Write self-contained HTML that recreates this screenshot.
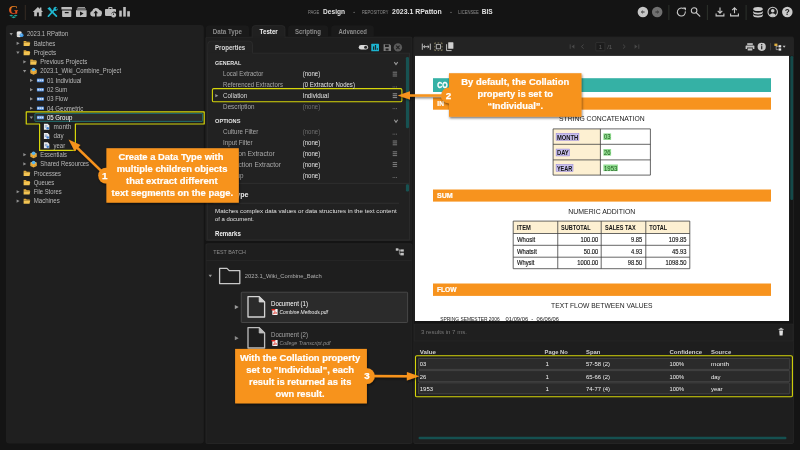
<!DOCTYPE html>
<html lang="en">
<head>
<meta charset="utf-8">
<title>Grooper Design - Collation Individual</title>
<style>
html,body{margin:0;padding:0;background:#141414;overflow:hidden;}
body{width:800px;height:450px;font-family:"Liberation Sans",sans-serif;}
svg{display:block;font-family:"Liberation Sans",sans-serif;will-change:transform;}
text{white-space:pre;}
</style>
</head>
<body>
<svg width="800" height="450" viewBox="0 0 800 450">
<defs>
<filter id="sh" x="-10%" y="-10%" width="125%" height="135%"><feDropShadow dx="0.6" dy="1.4" stdDeviation="1.3" flood-color="#000" flood-opacity="0.55"/></filter>
</defs>
<rect x="0.00" y="0.00" width="800.00" height="450.00" fill="#141414" />
<linearGradient id="lg" x1="0" y1="0" x2="0" y2="1"><stop offset="0" stop-color="#ec9a1e"/><stop offset="0.55" stop-color="#e0561c"/><stop offset="1" stop-color="#d42a20"/></linearGradient>
<text x="8.5" y="14.4" font-size="12.9" font-weight="bold" font-family="Liberation Serif, serif" fill="url(#lg)" textLength="9.9" lengthAdjust="spacingAndGlyphs">G</text>
<path d="M9.2 15.5 l2 -0.8 l2 0.8 l-2 0.9 Z M13.6 15.5 l2 -0.8 l2 0.8 l-2 0.9 Z M11.4 17.2 l2.2 -0.9 l2.2 0.9 l-2.2 1 Z" fill="#1fa79a" />
<line x1="25.30" y1="5.00" x2="25.30" y2="20.00" stroke="#3a2f26" stroke-width="0.9" />
<g fill="#bdbdbd">
<path d="M32.8 11.9 L37.9 7 L39.9 8.9 V7.6 h1.5 v2.7 L43 11.9 H41.6 V16.2 H38.9 V12.6 H36.9 V16.2 H34.2 V11.9 Z" />
</g>
<g stroke="#20b8d0" stroke-width="1.7" stroke-linecap="round" fill="none">
<path d="M48.4 16.2 L54.6 9.4" fill="none" />
<path d="M50.6 10.4 L56.4 16.2" fill="none" />
</g>
<path d="M47.4 8.6 l2.2 -1.6 l2.2 2.4 l-1.6 1.6 Z" fill="#20b8d0" />
<path d="M53.4 8.2 a2.4 2.4 0 0 1 3.6 -0.9 l-1.6 1.5 l0.9 0.9 l1.5 -1.5 a2.4 2.4 0 0 1 -3.1 2.6 Z" fill="#20b8d0" />
<g fill="#bdbdbd">
<rect x="61.40" y="7.00" width="10.60" height="2.60" fill="#bdbdbd" rx="0.5" />
<path d="M62.1 10.4 H71.3 V16.2 q0 0.8 -0.8 0.8 H62.9 q-0.8 0 -0.8 -0.8 Z M64.8 12 v1.2 h3.8 v-1.2 Z" fill-rule="evenodd"/>
<rect x="77.60" y="7.00" width="7.40" height="0.80" fill="#bdbdbd" />
<rect x="76.80" y="8.50" width="9.00" height="1.00" fill="#bdbdbd" />
<path d="M76 10.3 H86.6 V16.2 q0 0.8 -0.8 0.8 H76.8 q-0.8 0 -0.8 -0.8 Z M80 11.4 v4.4 l3.6 -2.2 Z" fill-rule="evenodd"/>
<path d="M92.6 16.4 a2.7 2.7 0 0 1 -0.4 -5.3 a3.9 3.9 0 0 1 7.3 -1 a3.2 3.2 0 0 1 -0.3 6.3 H96.6 V13.2 h1.5 L95.8 10.6 L93.5 13.2 h1.5 v3.2 Z" />
<path d="M108.3 8.9 V7.8 q0 -0.8 0.8 -0.8 h2.6 q0.8 0 0.8 0.8 V8.9 h2.7 q0.8 0 0.8 0.8 V12 a3.2 3.2 0 0 0 -4.6 3.9 H105.8 q-0.8 0 -0.8 -0.8 V9.7 q0 -0.8 0.8 -0.8 Z M109.4 8.9 h2 v-0.9 h-2 Z" fill-rule="evenodd"/>
<path d="M113.6 12.4 a2.6 2.6 0 1 0 0.01 0 Z M113.2 13.4 h0.8 v1.7 h-0.8 Z" fill-rule="evenodd"/>
<rect x="119.20" y="10.60" width="2.60" height="6.00" fill="#bdbdbd" />
<rect x="123.20" y="7.00" width="2.60" height="9.60" fill="#bdbdbd" />
<rect x="127.20" y="11.20" width="2.70" height="5.40" fill="#bdbdbd" />
</g>
<text x="308.10" y="14.10" font-size="5.2" fill="#8e8e8e" textLength="11.30" lengthAdjust="spacingAndGlyphs" >PAGE</text>
<text x="323.10" y="14.10" font-size="7.2" fill="#e2e2e2" font-weight="bold" textLength="21.90" lengthAdjust="spacingAndGlyphs" >Design</text>
<circle cx="354.1" cy="12.4" r="0.65" fill="#787878"/>
<text x="361.90" y="14.10" font-size="5.2" fill="#8e8e8e" textLength="26.50" lengthAdjust="spacingAndGlyphs" >REPOSITORY</text>
<text x="392.10" y="14.10" font-size="7.2" fill="#e2e2e2" font-weight="bold" textLength="49.60" lengthAdjust="spacingAndGlyphs" >2023.1 RPatton</text>
<circle cx="451" cy="12.4" r="0.65" fill="#787878"/>
<text x="458.20" y="14.10" font-size="5.2" fill="#8e8e8e" textLength="20.60" lengthAdjust="spacingAndGlyphs" >LICENSEE</text>
<text x="481.80" y="14.10" font-size="7.2" fill="#e2e2e2" font-weight="bold" textLength="10.90" lengthAdjust="spacingAndGlyphs" >BIS</text>
<circle cx="642.9" cy="12" r="5.25" fill="#c6c6c6"/>
<path d="M644.6 12 H641.8 M642.7 10.8 l-1.3 1.2 l1.3 1.2" fill="none" stroke="#333" stroke-width="1.0" />
<circle cx="657.2" cy="12" r="5.25" fill="#707070"/>
<path d="M655.4 12 H658.2 M657.3 10.8 l1.3 1.2 l-1.3 1.2" fill="none" stroke="#333" stroke-width="1.0" />
<line x1="668.90" y1="5.00" x2="668.90" y2="20.00" stroke="#30352f" stroke-width="0.9" />
<path d="M685.3 11.4 a4 4 0 1 1 -1.6 -2.6" fill="none" stroke="#cbcbcb" stroke-width="1.05" />
<path d="M682.9 7.5 h3 v3 Z" fill="#cbcbcb" transform="rotate(6 684.4 9)"/>
<circle cx="694.1" cy="10.5" r="2.8" fill="none" stroke="#cbcbcb" stroke-width="1.05"/>
<line x1="696.20" y1="12.60" x2="699.80" y2="16.10" stroke="#cbcbcb" stroke-width="1.25" stroke-linecap="round"/>
<line x1="707.40" y1="5.00" x2="707.40" y2="20.00" stroke="#30352f" stroke-width="0.9" />
<path d="M720 7.6 V13 M717.7 10.8 l2.3 2.3 l2.3 -2.3" fill="none" stroke="#cbcbcb" stroke-width="1.1" />
<path d="M716.1 13.4 v2.5 h7.8 v-2.5" fill="none" stroke="#cbcbcb" stroke-width="1.1" />
<path d="M734.5 13.2 V8 M732.2 10.2 l2.3 -2.3 l2.3 2.3" fill="none" stroke="#cbcbcb" stroke-width="1.1" />
<path d="M730.6 13.4 v2.5 h7.8 v-2.5" fill="none" stroke="#cbcbcb" stroke-width="1.1" />
<line x1="746.10" y1="5.00" x2="746.10" y2="20.00" stroke="#30352f" stroke-width="0.9" />
<g fill="#cbcbcb">
<ellipse cx="758" cy="9" rx="4.8" ry="2"/>
<path d="M753.2 10.7 a4.8 2 0 0 0 9.6 0 v1.9 a4.8 2 0 0 1 -9.6 0 Z" />
<path d="M753.2 13.8 a4.8 2 0 0 0 9.6 0 v1.6 a4.8 2 0 0 1 -9.6 0 Z" />
</g>
<circle cx="772.7" cy="12" r="5.25" fill="#cbcbcb"/>
<circle cx="772.7" cy="12" r="4.2" fill="#1a1a1a"/>
<circle cx="772.7" cy="10.7" r="1.8" fill="#cbcbcb"/>
<path d="M769.3 15.2 q3.4 -3.8 6.8 0 q-3.4 2.6 -6.8 0 Z" fill="#cbcbcb" />
<circle cx="787.3" cy="12" r="5.25" fill="#cbcbcb"/>
<text x="787.30" y="15.05" font-size="8.2" fill="#1a1a1a" font-weight="bold" text-anchor="middle" >?</text>
<rect x="6.00" y="25.00" width="197.75" height="418.50" fill="#1f1f1f" rx="3" />
<rect x="34.90" y="113.40" width="167.70" height="8.00" fill="#2b2b2b" rx="0.6" stroke="#1f7575" stroke-width="0.9" />
<path d="M9.50 32.90 H12.90 L11.20 35.50 Z" fill="#909090" />
<path d="M16.80 32.10 a2.4 0.9 0 0 1 4.8 0 v4.2 a2.4 0.9 0 0 1 -4.8 0 Z" fill="#e6e6e6" />
<path d="M16.80 33.50 a2.4 0.9 0 0 0 4.8 0 M16.80 34.90 a2.4 0.9 0 0 0 4.8 0" fill="none" stroke="#a8a8a8" stroke-width="0.4" />
<circle cx="21.60" cy="35.20" r="1.9" fill="#3d9ae8"/>
<circle cx="21.20" cy="34.80" r="0.7" fill="#9fd0f8"/>
<text x="27.00" y="36.35" font-size="6.35" fill="#bababa" textLength="41.20" lengthAdjust="spacingAndGlyphs" >2023.1 RPatton</text>
<path d="M16.60 41.68 L19.60 43.28 L16.60 44.88 Z" fill="#909090" />
<path d="M23.63 40.88 h2.3 l0.8 0.9 h3 v1 h-6.1 Z" fill="#e0a93a" />
<path d="M23.63 42.68 h6.6 l-0.7 3.4 h-5.9 Z" fill="#f3c452" />
<text x="33.63" y="45.63" font-size="6.35" fill="#bababa" textLength="21.60" lengthAdjust="spacingAndGlyphs" >Batches</text>
<path d="M16.20 51.46 H19.60 L17.90 54.06 Z" fill="#909090" />
<path d="M23.63 50.16 h2.3 l0.8 0.9 h3 v1 h-6.1 Z" fill="#e0a93a" />
<path d="M23.63 51.96 h6.6 l-0.7 3.4 h-5.9 Z" fill="#f3c452" />
<text x="33.63" y="54.91" font-size="6.35" fill="#bababa" textLength="22.60" lengthAdjust="spacingAndGlyphs" >Projects</text>
<path d="M23.30 60.24 L26.30 61.84 L23.30 63.44 Z" fill="#909090" />
<path d="M30.26 59.44 h2.3 l0.8 0.9 h3 v1 h-6.1 Z" fill="#e0a93a" />
<path d="M30.26 61.24 h6.6 l-0.7 3.4 h-5.9 Z" fill="#f3c452" />
<text x="40.26" y="64.19" font-size="6.35" fill="#bababa" textLength="47.00" lengthAdjust="spacingAndGlyphs" >Previous Projects</text>
<path d="M22.90 70.02 H26.30 L24.60 72.62 Z" fill="#909090" />
<path d="M30.36 69.82 L33.56 71.02 L36.76 69.82 V73.22 L33.56 74.82 L30.36 73.22 Z" fill="#ecae3e" />
<path d="M30.36 69.82 L33.56 71.02 L36.76 69.82 L33.56 68.72 Z" fill="#f6d27e" />
<path d="M31.46 72.52 l1.4 0.7 M35.66 72.52 l-1.4 0.7" fill="none" stroke="#b07818" stroke-width="0.5" />
<circle cx="33.56" cy="69.62" r="1.75" fill="#55b4f0"/>
<text x="40.26" y="73.47" font-size="6.35" fill="#bababa" textLength="80.80" lengthAdjust="spacingAndGlyphs" >2023.1_Wiki_Combine_Project</text>
<path d="M30.00 78.80 L33.00 80.40 L30.00 82.00 Z" fill="#909090" />
<rect x="36.89" y="78.60" width="7.00" height="3.60" fill="#3f7fd2" rx="0.4" />
<rect x="37.39" y="79.40" width="6.00" height="1.90" fill="#d6e5f8" />
<line x1="39.39" y1="79.40" x2="39.39" y2="81.30" stroke="#3f7fd2" stroke-width="0.6" />
<line x1="41.39" y1="79.40" x2="41.39" y2="81.30" stroke="#3f7fd2" stroke-width="0.6" />
<text x="46.89" y="82.75" font-size="6.35" fill="#bababa" textLength="34.60" lengthAdjust="spacingAndGlyphs" >01 Individual</text>
<path d="M30.00 88.08 L33.00 89.68 L30.00 91.28 Z" fill="#909090" />
<rect x="36.89" y="87.88" width="7.00" height="3.60" fill="#3f7fd2" rx="0.4" />
<rect x="37.39" y="88.68" width="6.00" height="1.90" fill="#d6e5f8" />
<line x1="39.39" y1="88.68" x2="39.39" y2="90.58" stroke="#3f7fd2" stroke-width="0.6" />
<line x1="41.39" y1="88.68" x2="41.39" y2="90.58" stroke="#3f7fd2" stroke-width="0.6" />
<text x="46.89" y="92.03" font-size="6.35" fill="#bababa" textLength="20.40" lengthAdjust="spacingAndGlyphs" >02 Sum</text>
<path d="M30.00 97.36 L33.00 98.96 L30.00 100.56 Z" fill="#909090" />
<rect x="36.89" y="97.16" width="7.00" height="3.60" fill="#3f7fd2" rx="0.4" />
<rect x="37.39" y="97.96" width="6.00" height="1.90" fill="#d6e5f8" />
<line x1="39.39" y1="97.96" x2="39.39" y2="99.86" stroke="#3f7fd2" stroke-width="0.6" />
<line x1="41.39" y1="97.96" x2="41.39" y2="99.86" stroke="#3f7fd2" stroke-width="0.6" />
<text x="46.89" y="101.31" font-size="6.35" fill="#bababa" textLength="20.80" lengthAdjust="spacingAndGlyphs" >03 Flow</text>
<path d="M30.00 106.64 L33.00 108.24 L30.00 109.84 Z" fill="#909090" />
<rect x="36.89" y="106.44" width="7.00" height="3.60" fill="#3f7fd2" rx="0.4" />
<rect x="37.39" y="107.24" width="6.00" height="1.90" fill="#d6e5f8" />
<line x1="39.39" y1="107.24" x2="39.39" y2="109.14" stroke="#3f7fd2" stroke-width="0.6" />
<line x1="41.39" y1="107.24" x2="41.39" y2="109.14" stroke="#3f7fd2" stroke-width="0.6" />
<text x="46.89" y="110.59" font-size="6.35" fill="#bababa" textLength="36.40" lengthAdjust="spacingAndGlyphs" >04 Geometric</text>
<path d="M29.60 116.42 H33.00 L31.30 119.02 Z" fill="#909090" />
<rect x="36.89" y="115.72" width="7.00" height="3.60" fill="#3f7fd2" rx="0.4" />
<rect x="37.39" y="116.52" width="6.00" height="1.90" fill="#d6e5f8" />
<line x1="39.39" y1="116.52" x2="39.39" y2="118.42" stroke="#3f7fd2" stroke-width="0.6" />
<line x1="41.39" y1="116.52" x2="41.39" y2="118.42" stroke="#3f7fd2" stroke-width="0.6" />
<text x="46.89" y="119.87" font-size="6.35" fill="#ffffff" textLength="25.40" lengthAdjust="spacingAndGlyphs" >05 Group</text>
<path d="M43.92 123.80 h3.8 l1.6 1.6 v4.4 h-5.4 Z" fill="#ececec" />
<path d="M44.82 125.80 h2.6 M44.82 127.10 h2" fill="none" stroke="#4d77b0" stroke-width="0.6" />
<circle cx="47.72" cy="128.30" r="1.25" fill="#3f7fd0"/>
<text x="53.52" y="129.15" font-size="6.35" fill="#bababa" textLength="17.80" lengthAdjust="spacingAndGlyphs" >month</text>
<path d="M43.92 133.08 h3.8 l1.6 1.6 v4.4 h-5.4 Z" fill="#ececec" />
<path d="M44.82 135.08 h2.6 M44.82 136.38 h2" fill="none" stroke="#4d77b0" stroke-width="0.6" />
<circle cx="47.72" cy="137.58" r="1.25" fill="#3f7fd0"/>
<text x="53.52" y="138.43" font-size="6.35" fill="#bababa" textLength="10.00" lengthAdjust="spacingAndGlyphs" >day</text>
<path d="M43.92 142.36 h3.8 l1.6 1.6 v4.4 h-5.4 Z" fill="#ececec" />
<path d="M44.82 144.36 h2.6 M44.82 145.66 h2" fill="none" stroke="#4d77b0" stroke-width="0.6" />
<circle cx="47.72" cy="146.86" r="1.25" fill="#3f7fd0"/>
<text x="53.52" y="147.71" font-size="6.35" fill="#bababa" textLength="11.60" lengthAdjust="spacingAndGlyphs" >year</text>
<path d="M23.30 153.04 L26.30 154.64 L23.30 156.24 Z" fill="#909090" />
<path d="M30.36 153.34 L33.56 154.54 L36.76 153.34 V156.74 L33.56 158.34 L30.36 156.74 Z" fill="#ecae3e" />
<path d="M30.36 153.34 L33.56 154.54 L36.76 153.34 L33.56 152.24 Z" fill="#f6d27e" />
<path d="M31.46 156.04 l1.4 0.7 M35.66 156.04 l-1.4 0.7" fill="none" stroke="#b07818" stroke-width="0.5" />
<circle cx="33.56" cy="153.14" r="1.75" fill="#55b4f0"/>
<text x="40.26" y="156.99" font-size="6.35" fill="#bababa" textLength="26.60" lengthAdjust="spacingAndGlyphs" >Essentials</text>
<path d="M23.30 162.32 L26.30 163.92 L23.30 165.52 Z" fill="#909090" />
<path d="M30.36 162.62 L33.56 163.82 L36.76 162.62 V166.02 L33.56 167.62 L30.36 166.02 Z" fill="#ecae3e" />
<path d="M30.36 162.62 L33.56 163.82 L36.76 162.62 L33.56 161.52 Z" fill="#f6d27e" />
<path d="M31.46 165.32 l1.4 0.7 M35.66 165.32 l-1.4 0.7" fill="none" stroke="#b07818" stroke-width="0.5" />
<circle cx="33.56" cy="162.42" r="1.75" fill="#55b4f0"/>
<text x="40.26" y="166.27" font-size="6.35" fill="#bababa" textLength="48.80" lengthAdjust="spacingAndGlyphs" >Shared Resources</text>
<path d="M23.63 170.80 h2.3 l0.8 0.9 h3 v1 h-6.1 Z" fill="#e0a93a" />
<path d="M23.63 172.60 h6.6 l-0.7 3.4 h-5.9 Z" fill="#f3c452" />
<text x="33.63" y="175.55" font-size="6.35" fill="#bababa" textLength="27.40" lengthAdjust="spacingAndGlyphs" >Processes</text>
<path d="M23.63 180.08 h2.3 l0.8 0.9 h3 v1 h-6.1 Z" fill="#e0a93a" />
<path d="M23.63 181.88 h6.6 l-0.7 3.4 h-5.9 Z" fill="#f3c452" />
<text x="33.63" y="184.83" font-size="6.35" fill="#bababa" textLength="20.60" lengthAdjust="spacingAndGlyphs" >Queues</text>
<path d="M16.60 190.16 L19.60 191.76 L16.60 193.36 Z" fill="#909090" />
<path d="M23.63 189.36 h2.3 l0.8 0.9 h3 v1 h-6.1 Z" fill="#e0a93a" />
<path d="M23.63 191.16 h6.6 l-0.7 3.4 h-5.9 Z" fill="#f3c452" />
<text x="33.63" y="194.11" font-size="6.35" fill="#bababa" textLength="28.00" lengthAdjust="spacingAndGlyphs" >File Stores</text>
<path d="M16.60 199.44 L19.60 201.04 L16.60 202.64 Z" fill="#909090" />
<path d="M23.63 198.64 h2.3 l0.8 0.9 h3 v1 h-6.1 Z" fill="#e0a93a" />
<path d="M23.63 200.44 h6.6 l-0.7 3.4 h-5.9 Z" fill="#f3c452" />
<text x="33.63" y="203.39" font-size="6.35" fill="#bababa" textLength="26.20" lengthAdjust="spacingAndGlyphs" >Machines</text>
<rect x="205.90" y="37.10" width="206.00" height="203.50" fill="#1e1e1e" rx="1.2" stroke="#2b2b2b" stroke-width="0.6" />
<path d="M205.9 36.9 V28.6 q0 -3 3 -3 H246 q3 0 3 3 V36.9 Z" fill="#1a1a1a" />
<text x="212.75" y="34.43" font-size="6.3" fill="#8c8c8c" font-weight="bold" textLength="29.30" lengthAdjust="spacingAndGlyphs" >Data Type</text>
<path d="M288.1 36.9 V28.6 q0 -3 3 -3 H325.1 q3 0 3 3 V36.9 Z" fill="#1a1a1a" />
<text x="295.00" y="34.43" font-size="6.3" fill="#8c8c8c" font-weight="bold" textLength="25.90" lengthAdjust="spacingAndGlyphs" >Scripting</text>
<path d="M331.25 36.9 V28.6 q0 -3 3 -3 H370.75 q3 0 3 3 V36.9 Z" fill="#1a1a1a" />
<text x="338.50" y="34.43" font-size="6.3" fill="#8c8c8c" font-weight="bold" textLength="28.40" lengthAdjust="spacingAndGlyphs" >Advanced</text>
<path d="M252.1 37.4 V28.6 q0 -3 3 -3 H282 q3 0 3 3 V37.4 Z" fill="#202020" stroke="#2d2d2d" stroke-width="0.6" />
<text x="259.60" y="34.43" font-size="6.3" fill="#f2f2f2" font-weight="bold" textLength="18.20" lengthAdjust="spacingAndGlyphs" >Tester</text>
<rect x="252.50" y="36.60" width="32.10" height="1.40" fill="#1f1f1f" />
<rect x="207.75" y="53.10" width="201.65" height="130.10" fill="#222222" stroke="#323232" stroke-width="0.6" />
<path d="M207.75 53.4 V44.2 q0 -3 3 -3 H249.5 q3 0 3 3 V53.4" fill="#222222" stroke="#323232" stroke-width="0.6" />
<rect x="208.10" y="52.60" width="44.10" height="1.40" fill="#222222" />
<text x="215.00" y="50.08" font-size="6.3" fill="#d8d8d8" font-weight="bold" textLength="30.25" lengthAdjust="spacingAndGlyphs" >Properties</text>
<rect x="358.75" y="45.00" width="9.35" height="4.60" fill="#d8d8d8" rx="2.3" />
<circle cx="365.6" cy="47.3" r="1.5" fill="#2a2a2a"/>
<rect x="371.25" y="43.75" width="7.75" height="7.50" fill="#1cb4d0" rx="0.5" />
<rect x="373.00" y="46.40" width="1.20" height="3.40" fill="#1a2a30" />
<rect x="374.90" y="45.00" width="1.20" height="4.80" fill="#1a2a30" />
<rect x="376.80" y="48.20" width="1.00" height="1.60" fill="#1a2a30" />
<path d="M383.6 44.2 h6 l1.4 1.4 v5.4 h-7.4 Z M385 44.8 v2.2 h3.8 v-2.2 Z M385.6 48.4 h3 v2 h-3 Z" fill="#7d7d7d" fill-rule="evenodd"/>
<circle cx="397.9" cy="47.4" r="4.2" fill="#5a5a5a"/>
<path d="M396.2 45.7 l3.4 3.4 M399.6 45.7 l-3.4 3.4" fill="none" stroke="#222" stroke-width="1.1" />
<rect x="405.90" y="56.90" width="3.10" height="71.40" fill="#175252" rx="1.4" />
<text x="215.00" y="65.12" font-size="6.0" fill="#e2e2e2" font-weight="bold" textLength="26.25" lengthAdjust="spacingAndGlyphs" >GENERAL</text>
<path d="M394.30 62.10 L396.00 64.50 L397.70 62.10" fill="none" stroke="#9a9a9a" stroke-width="1.1" />
<text x="215.00" y="122.92" font-size="6.0" fill="#e2e2e2" font-weight="bold" textLength="25.40" lengthAdjust="spacingAndGlyphs" >OPTIONS</text>
<path d="M394.30 119.80 L396.00 122.20 L397.70 119.80" fill="none" stroke="#9a9a9a" stroke-width="1.1" />
<rect x="212.40" y="88.60" width="189.50" height="13.20" fill="none" rx="1.4" stroke="#d6d60a" stroke-width="1.1" />
<text x="223.10" y="76.45" font-size="6.35" fill="#a8a8a8" textLength="40.20" lengthAdjust="spacingAndGlyphs" >Local Extractor</text>
<text x="302.70" y="76.45" font-size="6.35" fill="#e4e4e4" textLength="17.60" lengthAdjust="spacingAndGlyphs" >(none)</text>
<line x1="392.70" y1="72.20" x2="397.10" y2="72.20" stroke="#8c8c8c" stroke-width="0.85" />
<line x1="392.70" y1="74.10" x2="397.10" y2="74.10" stroke="#8c8c8c" stroke-width="0.85" />
<line x1="392.70" y1="76.00" x2="397.10" y2="76.00" stroke="#8c8c8c" stroke-width="0.85" />
<text x="223.10" y="87.25" font-size="6.35" fill="#a8a8a8" textLength="59.80" lengthAdjust="spacingAndGlyphs" >Referenced Extractors</text>
<text x="302.70" y="87.25" font-size="6.35" fill="#e4e4e4" textLength="52.20" lengthAdjust="spacingAndGlyphs" >(0 Extractor Nodes)</text>
<rect x="392.65" y="86.50" width="0.90" height="0.90" fill="#7a7a7a" />
<rect x="394.35" y="86.50" width="0.90" height="0.90" fill="#7a7a7a" />
<rect x="396.05" y="86.50" width="0.90" height="0.90" fill="#7a7a7a" />
<text x="223.10" y="98.05" font-size="6.35" fill="#d8d8d8" textLength="24.20" lengthAdjust="spacingAndGlyphs" >Collation</text>
<text x="302.70" y="98.05" font-size="6.35" fill="#e4e4e4" textLength="26.20" lengthAdjust="spacingAndGlyphs" >Individual</text>
<line x1="392.70" y1="93.80" x2="397.10" y2="93.80" stroke="#a6a6a6" stroke-width="0.85" />
<line x1="392.70" y1="95.70" x2="397.10" y2="95.70" stroke="#a6a6a6" stroke-width="0.85" />
<line x1="392.70" y1="97.60" x2="397.10" y2="97.60" stroke="#a6a6a6" stroke-width="0.85" />
<text x="223.10" y="108.95" font-size="6.35" fill="#a8a8a8" textLength="31.40" lengthAdjust="spacingAndGlyphs" >Description</text>
<text x="302.70" y="108.95" font-size="6.35" fill="#6e6e6e" textLength="17.60" lengthAdjust="spacingAndGlyphs" >(none)</text>
<rect x="392.65" y="108.20" width="0.90" height="0.90" fill="#7a7a7a" />
<rect x="394.35" y="108.20" width="0.90" height="0.90" fill="#7a7a7a" />
<rect x="396.05" y="108.20" width="0.90" height="0.90" fill="#7a7a7a" />
<text x="223.10" y="134.45" font-size="6.35" fill="#a8a8a8" textLength="35.20" lengthAdjust="spacingAndGlyphs" >Culture Filter</text>
<text x="302.70" y="134.45" font-size="6.35" fill="#6e6e6e" textLength="17.60" lengthAdjust="spacingAndGlyphs" >(none)</text>
<rect x="392.65" y="133.70" width="0.90" height="0.90" fill="#7a7a7a" />
<rect x="394.35" y="133.70" width="0.90" height="0.90" fill="#7a7a7a" />
<rect x="396.05" y="133.70" width="0.90" height="0.90" fill="#7a7a7a" />
<text x="223.10" y="145.25" font-size="6.35" fill="#a8a8a8" textLength="29.60" lengthAdjust="spacingAndGlyphs" >Input Filter</text>
<text x="302.70" y="145.25" font-size="6.35" fill="#e4e4e4" textLength="17.60" lengthAdjust="spacingAndGlyphs" >(none)</text>
<line x1="392.70" y1="141.00" x2="397.10" y2="141.00" stroke="#8c8c8c" stroke-width="0.85" />
<line x1="392.70" y1="142.90" x2="397.10" y2="142.90" stroke="#8c8c8c" stroke-width="0.85" />
<line x1="392.70" y1="144.80" x2="397.10" y2="144.80" stroke="#8c8c8c" stroke-width="0.85" />
<text x="223.10" y="156.05" font-size="6.35" fill="#a8a8a8" textLength="51.60" lengthAdjust="spacingAndGlyphs" >Version Extractor</text>
<text x="302.70" y="156.05" font-size="6.35" fill="#e4e4e4" textLength="17.60" lengthAdjust="spacingAndGlyphs" >(none)</text>
<line x1="392.70" y1="151.80" x2="397.10" y2="151.80" stroke="#8c8c8c" stroke-width="0.85" />
<line x1="392.70" y1="153.70" x2="397.10" y2="153.70" stroke="#8c8c8c" stroke-width="0.85" />
<line x1="392.70" y1="155.60" x2="397.10" y2="155.60" stroke="#8c8c8c" stroke-width="0.85" />
<text x="223.10" y="166.85" font-size="6.35" fill="#a8a8a8" textLength="57.80" lengthAdjust="spacingAndGlyphs" >Extraction Extractor</text>
<text x="302.70" y="166.85" font-size="6.35" fill="#e4e4e4" textLength="17.60" lengthAdjust="spacingAndGlyphs" >(none)</text>
<line x1="392.70" y1="162.60" x2="397.10" y2="162.60" stroke="#8c8c8c" stroke-width="0.85" />
<line x1="392.70" y1="164.50" x2="397.10" y2="164.50" stroke="#8c8c8c" stroke-width="0.85" />
<line x1="392.70" y1="166.40" x2="397.10" y2="166.40" stroke="#8c8c8c" stroke-width="0.85" />
<text x="223.10" y="177.75" font-size="6.35" fill="#a8a8a8" textLength="20.50" lengthAdjust="spacingAndGlyphs" >Lookup</text>
<text x="302.70" y="177.75" font-size="6.35" fill="#e4e4e4" textLength="17.60" lengthAdjust="spacingAndGlyphs" >(none)</text>
<rect x="392.65" y="177.00" width="0.90" height="0.90" fill="#7a7a7a" />
<rect x="394.35" y="177.00" width="0.90" height="0.90" fill="#7a7a7a" />
<rect x="396.05" y="177.00" width="0.90" height="0.90" fill="#7a7a7a" />
<path d="M215.30 94.10 L218.30 95.70 L215.30 97.30 Z" fill="#9a9a9a" />
<rect x="207.75" y="183.60" width="201.65" height="56.40" fill="#212121" stroke="#323232" stroke-width="0.6" />
<text x="215.00" y="197.20" font-size="7.0" fill="#ececec" font-weight="bold" textLength="33.50" lengthAdjust="spacingAndGlyphs" >Data Type</text>
<line x1="213.40" y1="203.20" x2="399.00" y2="203.20" stroke="#3a3a3a" stroke-width="0.6" />
<text x="215.00" y="213.06" font-size="6.1" fill="#e0e0e0" textLength="181.60" lengthAdjust="spacingAndGlyphs" >Matches complex data values or data structures in the text content</text>
<text x="215.00" y="220.86" font-size="6.1" fill="#e0e0e0" textLength="39.00" lengthAdjust="spacingAndGlyphs" >of a document.</text>
<text x="215.00" y="235.53" font-size="6.3" fill="#f0f0f0" font-weight="bold" textLength="25.80" lengthAdjust="spacingAndGlyphs" >Remarks</text>
<rect x="405.90" y="184.30" width="3.10" height="7.20" fill="#175252" rx="1.2" />
<rect x="205.90" y="243.80" width="206.00" height="199.70" fill="#1e1e1e" rx="1.2" stroke="#2b2b2b" stroke-width="0.6" />
<line x1="206.20" y1="260.60" x2="411.60" y2="260.60" stroke="#2e2e2e" stroke-width="0.6" />
<text x="213.20" y="254.17" font-size="5.6" fill="#8e8e8e" textLength="32.70" lengthAdjust="spacingAndGlyphs" >TEST BATCH</text>
<g fill="#c4c4c4">
<rect x="395.80" y="248.30" width="2.60" height="2.40" fill="#c4c4c4" />
<rect x="400.40" y="249.40" width="3.40" height="2.20" fill="#c4c4c4" />
<rect x="400.40" y="252.80" width="3.40" height="2.60" fill="#c4c4c4" />
</g>
<path d="M398.4 249.6 h1 v4.6 h1.4 M399.4 250.4 h1.2" fill="none" stroke="#c4c4c4" stroke-width="0.6" />
<path d="M208.60 274.70 H212.00 L210.30 277.30 Z" fill="#9a9a9a" />
<path d="M219.6 268.4 H227 L229.2 270.6 H239.8 V283.6 H219.6 Z" fill="none" stroke="#c8c8c8" stroke-width="1.3" stroke-linejoin="round"/>
<text x="244.80" y="277.99" font-size="6.2" fill="#b0b0b0" textLength="77.00" lengthAdjust="spacingAndGlyphs" >2023.1_Wiki_Combine_Batch</text>
<rect x="241.25" y="292.20" width="166.35" height="30.30" fill="#2b2b2b" rx="0.8" stroke="#565656" stroke-width="0.7" />
<path d="M234.81 305.02 L238.71 307.10 L234.81 309.18 Z" fill="#9a9a9a" />
<path d="M248.0 296.6 H259.20000000000005 L264.6 302.0 V317.0 H248.0 Z" fill="none" stroke="#d4d4d4" stroke-width="1.3" stroke-linejoin="round"/>
<path d="M259.20000000000005 296.6 V302.0 H264.6 Z" fill="#d4d4d4" stroke="#d4d4d4" stroke-width="0.8" stroke-linejoin="round"/>
<text x="271.00" y="306.17" font-size="6.4" fill="#ffffff" textLength="37.00" lengthAdjust="spacingAndGlyphs" >Document (1)</text>
<rect x="272.30" y="309.10" width="5.30" height="5.90" fill="#f6f6f6" rx="0.4" />
<rect x="271.70" y="309.10" width="3.50" height="1.40" fill="#e0281e" rx="0.2" />
<path d="M273.50 313.90 q1.2 -3 1.6 -2.4 q0.3 0.9 1.7 1.6 q-2.2 -0.3 -3.3 0.8" fill="none" stroke="#e0281e" stroke-width="0.7" />
<text x="279.40" y="314.00" font-size="5.4" fill="#f0f0f0" font-style="italic" textLength="48.50" lengthAdjust="spacingAndGlyphs" >Combine Methods.pdf</text>
<path d="M234.81 336.12 L238.71 338.20 L234.81 340.28 Z" fill="#8a8a8a" />
<path d="M248.0 327.6 H259.20000000000005 L264.6 333.0 V348.0 H248.0 Z" fill="none" stroke="#bdbdbd" stroke-width="1.3" stroke-linejoin="round"/>
<path d="M259.20000000000005 327.6 V333.0 H264.6 Z" fill="#bdbdbd" stroke="#bdbdbd" stroke-width="0.8" stroke-linejoin="round"/>
<text x="271.00" y="337.17" font-size="6.4" fill="#a4a4a4" textLength="37.00" lengthAdjust="spacingAndGlyphs" >Document (2)</text>
<rect x="272.30" y="340.10" width="5.30" height="5.90" fill="#f6f6f6" rx="0.4" />
<rect x="271.70" y="340.10" width="3.50" height="1.40" fill="#e0281e" rx="0.2" />
<path d="M273.50 344.90 q1.2 -3 1.6 -2.4 q0.3 0.9 1.7 1.6 q-2.2 -0.3 -3.3 0.8" fill="none" stroke="#e0281e" stroke-width="0.7" />
<text x="279.40" y="345.00" font-size="5.4" fill="#8c8c8c" font-style="italic" textLength="51.20" lengthAdjust="spacingAndGlyphs" >College Transcript.pdf</text>
<rect x="413.80" y="37.10" width="379.60" height="406.40" fill="#1e1e1e" rx="1.2" stroke="#2b2b2b" stroke-width="0.6" />
<rect x="414.20" y="37.50" width="378.80" height="18.40" fill="#232323" />
<path d="M422.3 43.6 V49.8 M430.3 43.6 V49.8 M423.6 46.7 H429 M424.9 45.4 l-1.4 1.3 l1.4 1.3 M427.7 45.4 l1.4 1.3 l-1.4 1.3" fill="none" stroke="#cfcfcf" stroke-width="0.9" />
<rect x="436.30" y="44.60" width="4.20" height="4.20" fill="none" stroke="#b8b8b8" stroke-width="0.9" />
<path d="M434.6 43 h1.4 M437.6 43 h1.6 M440.8 43 h1.4 M434.6 50.4 h1.4 M437.6 50.4 h1.6 M440.8 50.4 h1.4 M434.8 43 v1.2 M434.8 45.9 v1.6 M434.8 49.2 v1.2 M442 43 v1.2 M442 45.9 v1.6 M442 49.2 v1.2" fill="none" stroke="#96906c" stroke-width="0.8" />
<rect x="448.20" y="42.30" width="5.20" height="6.50" fill="#cfcfcf" rx="0.5" />
<path d="M446.6 44.2 V50.6 H451.6" fill="none" stroke="#cfcfcf" stroke-width="0.9" />
<path d="M570.2 44.4 v4.4" fill="none" stroke="#484848" stroke-width="0.9" />
<path d="M574.4 44.4 L571.6 46.6 L574.4 48.8 Z" fill="#484848" />
<path d="M583.6 44.6 L581.4 46.6 L583.6 48.6" fill="none" stroke="#484848" stroke-width="0.9" />
<rect x="595.80" y="42.40" width="9.10" height="8.40" fill="#1c1c1c" rx="0.6" stroke="#3a3a3a" stroke-width="0.6" />
<text x="600.40" y="48.92" font-size="6" fill="#5c5c5c" text-anchor="middle" >1</text>
<text x="607.20" y="48.92" font-size="6" fill="#5c5c5c" >/1</text>
<path d="M623 44.6 L625.2 46.6 L623 48.6" fill="none" stroke="#484848" stroke-width="0.9" />
<path d="M634.6 44.4 L637.4 46.6 L634.6 48.8 Z" fill="#484848" />
<path d="M638.8 44.4 v4.4" fill="none" stroke="#484848" stroke-width="0.9" />
<path d="M747.2 43.2 h5.6 v1.7 h-5.6 Z" fill="#c4c4c4" />
<path d="M746.3 45.4 h7.4 q0.7 0 0.7 0.7 v2.9 h-1.5 v-1.5 h-5.8 v1.5 h-1.5 v-2.9 q0 -0.7 0.7 -0.7 Z" fill="#c4c4c4" />
<path d="M747.7 48.4 h4.6 v2.1 h-4.6 Z" fill="#c4c4c4" />
<circle cx="761.7" cy="46.8" r="4.1" fill="#c8c8c8"/>
<rect x="761.10" y="46.10" width="1.20" height="3.20" fill="#222" />
<circle cx="761.7" cy="44.7" r="0.75" fill="#222"/>
<line x1="770.50" y1="43.20" x2="770.50" y2="50.40" stroke="#4a4a4a" stroke-width="0.7" />
<rect x="774.40" y="43.60" width="3.00" height="2.40" fill="#e0b040" />
<rect x="778.60" y="45.20" width="2.60" height="2.20" fill="#e8e8e8" />
<rect x="778.60" y="48.40" width="2.60" height="2.20" fill="#e8e8e8" />
<path d="M776.2 46 v3.6 h2.4 M776.2 46.4 h2.4" fill="none" stroke="#c8c8c8" stroke-width="0.6" />
<path d="M782.6 45.8 h3 l-1.5 2 Z" fill="#c8c8c8" />
<rect x="415.00" y="55.90" width="374.20" height="265.10" fill="#ffffff" />
<rect x="789.20" y="55.90" width="4.00" height="265.10" fill="#151515" />
<rect x="790.30" y="56.00" width="2.90" height="144.00" fill="#144a4a" rx="1.2" />
<rect x="433.00" y="78.20" width="338.00" height="13.80" fill="#35b1a5" />
<text x="437.20" y="87.92" font-size="8.4" fill="#ffffff" font-weight="bold" textLength="10.40" lengthAdjust="spacingAndGlyphs" stroke="#fff" stroke-width="0.35">CO</text>
<rect x="433.00" y="97.50" width="338.00" height="12.20" fill="#f7931e" />
<text x="437.30" y="105.64" font-size="6.5" fill="#ffffff" font-weight="bold" textLength="6.60" lengthAdjust="spacingAndGlyphs" stroke="#fff" stroke-width="0.2">IN</text>
<text x="601.80" y="121.46" font-size="7.4" fill="#1a1a1a" text-anchor="middle" textLength="85.60" lengthAdjust="spacingAndGlyphs" >STRING CONCATENATION</text>
<rect x="553.10" y="128.90" width="47.30" height="46.20" fill="#fdf0d2" />
<line x1="553.10" y1="128.90" x2="650.40" y2="128.90" stroke="#404040" stroke-width="0.8" />
<line x1="553.10" y1="144.30" x2="650.40" y2="144.30" stroke="#404040" stroke-width="0.8" />
<line x1="553.10" y1="159.90" x2="650.40" y2="159.90" stroke="#404040" stroke-width="0.8" />
<line x1="553.10" y1="175.10" x2="650.40" y2="175.10" stroke="#404040" stroke-width="0.8" />
<line x1="553.10" y1="128.90" x2="553.10" y2="175.10" stroke="#404040" stroke-width="0.8" />
<line x1="600.40" y1="128.90" x2="600.40" y2="175.10" stroke="#404040" stroke-width="0.8" />
<line x1="650.40" y1="128.90" x2="650.40" y2="175.10" stroke="#404040" stroke-width="0.8" />
<rect x="556.10" y="133.40" width="22.80" height="6.90" fill="#c8c0ee" stroke="#8f80da" stroke-width="0.5" />
<text x="556.90" y="139.54" font-size="7.9" fill="#141414" font-weight="bold" textLength="21.30" lengthAdjust="spacingAndGlyphs" >MONTH</text>
<rect x="603.40" y="133.40" width="7.70" height="6.60" fill="#8fdc8f" />
<text x="604.00" y="139.44" font-size="7.6" fill="#1d5a1d" textLength="6.60" lengthAdjust="spacingAndGlyphs" >03</text>
<rect x="556.10" y="149.05" width="13.40" height="6.90" fill="#c8c0ee" stroke="#8f80da" stroke-width="0.5" />
<text x="556.90" y="155.19" font-size="7.9" fill="#141414" font-weight="bold" textLength="11.90" lengthAdjust="spacingAndGlyphs" >DAY</text>
<rect x="603.40" y="149.05" width="7.70" height="6.60" fill="#8fdc8f" />
<text x="604.00" y="155.09" font-size="7.6" fill="#1d5a1d" textLength="6.60" lengthAdjust="spacingAndGlyphs" >26</text>
<rect x="556.10" y="164.50" width="16.90" height="6.90" fill="#c8c0ee" stroke="#8f80da" stroke-width="0.5" />
<text x="556.90" y="170.64" font-size="7.9" fill="#141414" font-weight="bold" textLength="15.40" lengthAdjust="spacingAndGlyphs" >YEAR</text>
<rect x="603.40" y="164.50" width="14.50" height="6.60" fill="#8fdc8f" />
<text x="604.00" y="170.54" font-size="7.6" fill="#1d5a1d" textLength="13.40" lengthAdjust="spacingAndGlyphs" >1953</text>
<rect x="433.00" y="189.50" width="338.00" height="12.10" fill="#f7931e" />
<text x="436.90" y="197.80" font-size="6.9" fill="#ffffff" font-weight="bold" textLength="15.90" lengthAdjust="spacingAndGlyphs" stroke="#fff" stroke-width="0.2">SUM</text>
<text x="601.80" y="213.66" font-size="7.4" fill="#1a1a1a" text-anchor="middle" textLength="67.00" lengthAdjust="spacingAndGlyphs" >NUMERIC ADDITION</text>
<rect x="513.20" y="221.10" width="176.60" height="12.40" fill="#fdf0d2" />
<line x1="513.20" y1="221.10" x2="689.80" y2="221.10" stroke="#404040" stroke-width="0.8" />
<line x1="513.20" y1="233.50" x2="689.80" y2="233.50" stroke="#404040" stroke-width="0.8" />
<line x1="513.20" y1="245.30" x2="689.80" y2="245.30" stroke="#404040" stroke-width="0.8" />
<line x1="513.20" y1="257.20" x2="689.80" y2="257.20" stroke="#404040" stroke-width="0.8" />
<line x1="513.20" y1="268.70" x2="689.80" y2="268.70" stroke="#404040" stroke-width="0.8" />
<line x1="513.20" y1="221.10" x2="513.20" y2="268.70" stroke="#404040" stroke-width="0.8" />
<line x1="557.75" y1="221.10" x2="557.75" y2="268.70" stroke="#404040" stroke-width="0.8" />
<line x1="601.20" y1="221.10" x2="601.20" y2="268.70" stroke="#404040" stroke-width="0.8" />
<line x1="645.80" y1="221.10" x2="645.80" y2="268.70" stroke="#404040" stroke-width="0.8" />
<line x1="689.80" y1="221.10" x2="689.80" y2="268.70" stroke="#404040" stroke-width="0.8" />
<text x="517.00" y="229.82" font-size="7.0" fill="#141414" font-weight="bold" textLength="13.80" lengthAdjust="spacingAndGlyphs" >ITEM</text>
<text x="561.00" y="229.82" font-size="7.0" fill="#141414" font-weight="bold" textLength="29.75" lengthAdjust="spacingAndGlyphs" >SUBTOTAL</text>
<text x="605.00" y="229.82" font-size="7.0" fill="#141414" font-weight="bold" textLength="30.60" lengthAdjust="spacingAndGlyphs" >SALES TAX</text>
<text x="649.30" y="229.82" font-size="7.0" fill="#141414" font-weight="bold" textLength="17.90" lengthAdjust="spacingAndGlyphs" >TOTAL</text>
<text x="517.00" y="241.78" font-size="6.9" fill="#141414" textLength="18.20" lengthAdjust="spacingAndGlyphs" stroke="#141414" stroke-width="0.15">Whosit</text>
<text x="598.20" y="241.78" font-size="6.9" fill="#141414" text-anchor="end" textLength="17.65" lengthAdjust="spacingAndGlyphs" stroke="#141414" stroke-width="0.15">100.00</text>
<text x="642.20" y="241.78" font-size="6.9" fill="#141414" text-anchor="end" textLength="11.15" lengthAdjust="spacingAndGlyphs" stroke="#141414" stroke-width="0.15">9.85</text>
<text x="686.50" y="241.78" font-size="6.9" fill="#141414" text-anchor="end" textLength="17.65" lengthAdjust="spacingAndGlyphs" stroke="#141414" stroke-width="0.15">109.85</text>
<text x="517.00" y="253.78" font-size="6.9" fill="#141414" textLength="19.80" lengthAdjust="spacingAndGlyphs" stroke="#141414" stroke-width="0.15">Whatsit</text>
<text x="598.20" y="253.78" font-size="6.9" fill="#141414" text-anchor="end" textLength="14.40" lengthAdjust="spacingAndGlyphs" stroke="#141414" stroke-width="0.15">50.00</text>
<text x="642.20" y="253.78" font-size="6.9" fill="#141414" text-anchor="end" textLength="11.15" lengthAdjust="spacingAndGlyphs" stroke="#141414" stroke-width="0.15">4.93</text>
<text x="686.50" y="253.78" font-size="6.9" fill="#141414" text-anchor="end" textLength="14.40" lengthAdjust="spacingAndGlyphs" stroke="#141414" stroke-width="0.15">45.93</text>
<text x="517.00" y="265.38" font-size="6.9" fill="#141414" textLength="17.40" lengthAdjust="spacingAndGlyphs" stroke="#141414" stroke-width="0.15">Whysit</text>
<text x="598.20" y="265.38" font-size="6.9" fill="#141414" text-anchor="end" textLength="20.90" lengthAdjust="spacingAndGlyphs" stroke="#141414" stroke-width="0.15">1000.00</text>
<text x="642.20" y="265.38" font-size="6.9" fill="#141414" text-anchor="end" textLength="14.40" lengthAdjust="spacingAndGlyphs" stroke="#141414" stroke-width="0.15">98.50</text>
<text x="686.50" y="265.38" font-size="6.9" fill="#141414" text-anchor="end" textLength="20.90" lengthAdjust="spacingAndGlyphs" stroke="#141414" stroke-width="0.15">1098.50</text>
<rect x="433.00" y="283.50" width="338.00" height="12.40" fill="#f7931e" />
<text x="436.90" y="291.90" font-size="6.9" fill="#ffffff" font-weight="bold" textLength="19.60" lengthAdjust="spacingAndGlyphs" stroke="#fff" stroke-width="0.2">FLOW</text>
<text x="601.80" y="307.66" font-size="7.4" fill="#1a1a1a" text-anchor="middle" textLength="101.50" lengthAdjust="spacingAndGlyphs" >TEXT FLOW BETWEEN VALUES</text>
<clipPath id="pg"><rect x="415" y="55.9" width="373.2" height="265.1"/></clipPath>
<text x="440.25" y="321.20" font-size="6.0" fill="#151515" textLength="59.50" lengthAdjust="spacingAndGlyphs" clip-path="url(#pg)">SPRING SEMESTER 2006</text>
<text x="505.60" y="321.20" font-size="6.0" fill="#151515" textLength="53.40" lengthAdjust="spacingAndGlyphs" clip-path="url(#pg)">01/09/06  -  06/06/06</text>
<rect x="414.10" y="321.00" width="379.00" height="3.00" fill="#141414" />
<rect x="414.20" y="324.00" width="378.80" height="17.00" fill="#1f1f1f" stroke="#2a2a2a" stroke-width="0.5" />
<text x="421.00" y="334.12" font-size="6.0" fill="#787878" textLength="46.00" lengthAdjust="spacingAndGlyphs" >3 results in 7 ms.</text>
<path d="M778.6 329.4 h5 M780.2 329.2 v-0.8 h1.8 v0.8" fill="none" stroke="#e0e0e0" stroke-width="0.8" />
<path d="M779.2 330.6 h3.8 l-0.4 5 h-3 Z" fill="#e0e0e0" />
<text x="419.80" y="353.66" font-size="6.1" fill="#cfcfcf" font-weight="bold" textLength="16.20" lengthAdjust="spacingAndGlyphs" >Value</text>
<text x="544.60" y="353.66" font-size="6.1" fill="#cfcfcf" font-weight="bold" textLength="23.20" lengthAdjust="spacingAndGlyphs" >Page No</text>
<text x="586.00" y="353.66" font-size="6.1" fill="#cfcfcf" font-weight="bold" textLength="14.40" lengthAdjust="spacingAndGlyphs" >Span</text>
<text x="669.50" y="353.66" font-size="6.1" fill="#cfcfcf" font-weight="bold" textLength="32.60" lengthAdjust="spacingAndGlyphs" >Confidence</text>
<text x="711.00" y="353.66" font-size="6.1" fill="#cfcfcf" font-weight="bold" textLength="20.20" lengthAdjust="spacingAndGlyphs" >Source</text>
<rect x="418.40" y="358.40" width="371.40" height="11.00" fill="#2b2b2b" rx="0.7" stroke="#505050" stroke-width="0.7" />
<text x="419.80" y="366.39" font-size="6.2" fill="#f0f0f0" textLength="6.50" lengthAdjust="spacingAndGlyphs" >03</text>
<text x="545.40" y="366.39" font-size="6.2" fill="#f0f0f0" >1</text>
<text x="586.00" y="366.39" font-size="6.2" fill="#f0f0f0" textLength="24.00" lengthAdjust="spacingAndGlyphs" >57-58 (2)</text>
<text x="669.50" y="366.39" font-size="6.2" fill="#f0f0f0" textLength="14.60" lengthAdjust="spacingAndGlyphs" >100%</text>
<text x="711.00" y="366.39" font-size="6.2" fill="#f0f0f0" textLength="18.00" lengthAdjust="spacingAndGlyphs" >month</text>
<rect x="418.40" y="370.60" width="371.40" height="11.10" fill="#2b2b2b" rx="0.7" stroke="#505050" stroke-width="0.7" />
<text x="419.80" y="378.69" font-size="6.2" fill="#f0f0f0" textLength="6.50" lengthAdjust="spacingAndGlyphs" >26</text>
<text x="545.40" y="378.69" font-size="6.2" fill="#f0f0f0" >1</text>
<text x="586.00" y="378.69" font-size="6.2" fill="#f0f0f0" textLength="24.00" lengthAdjust="spacingAndGlyphs" >65-66 (2)</text>
<text x="669.50" y="378.69" font-size="6.2" fill="#f0f0f0" textLength="14.60" lengthAdjust="spacingAndGlyphs" >100%</text>
<text x="711.00" y="378.69" font-size="6.2" fill="#f0f0f0" textLength="9.60" lengthAdjust="spacingAndGlyphs" >day</text>
<rect x="418.40" y="382.80" width="371.40" height="11.10" fill="#2b2b2b" rx="0.7" stroke="#505050" stroke-width="0.7" />
<text x="419.80" y="390.79" font-size="6.2" fill="#f0f0f0" textLength="13.20" lengthAdjust="spacingAndGlyphs" >1953</text>
<text x="545.40" y="390.79" font-size="6.2" fill="#f0f0f0" >1</text>
<text x="586.00" y="390.79" font-size="6.2" fill="#f0f0f0" textLength="24.00" lengthAdjust="spacingAndGlyphs" >74-77 (4)</text>
<text x="669.50" y="390.79" font-size="6.2" fill="#f0f0f0" textLength="14.60" lengthAdjust="spacingAndGlyphs" >100%</text>
<text x="711.00" y="390.79" font-size="6.2" fill="#f0f0f0" textLength="11.60" lengthAdjust="spacingAndGlyphs" >year</text>
<rect x="415.50" y="355.70" width="376.90" height="41.10" fill="none" rx="1.4" stroke="#d6d60a" stroke-width="1.1" />
<rect x="418.50" y="436.80" width="368.00" height="2.50" fill="#155050" rx="1.2" />
<path d="M26.25 111.9 H204.2 V124 H75.4 V150.4 H39.6 V124 H26.25 Z" fill="none" stroke="#d6d60a" stroke-width="1.2" stroke-linejoin="round"/>
<g filter="url(#sh)">
<line x1="106.10" y1="175.60" x2="76.81" y2="147.41" stroke="#f7931e" stroke-width="2.5" />
<path d="M68.60 139.50 L80.45 145.07 L74.62 151.13 Z" fill="#f7931e" />
<circle cx="106.1" cy="175.6" r="7.9" fill="#f7931e"/>
<rect x="106.40" y="148.20" width="132.40" height="54.50" fill="#f7931e" />
</g>
<text x="104.80" y="178.98" font-size="9.8" fill="#ffffff" font-weight="bold" text-anchor="middle" stroke="#fff" stroke-width="0.25">1</text>
<text x="170.90" y="160.30" font-size="9.7" fill="#ffffff" font-weight="bold" text-anchor="middle" textLength="105.00" lengthAdjust="spacingAndGlyphs" stroke="#fff" stroke-width="0.22">Create a Data Type with</text>
<text x="172.10" y="172.10" font-size="9.7" fill="#ffffff" font-weight="bold" text-anchor="middle" textLength="110.70" lengthAdjust="spacingAndGlyphs" stroke="#fff" stroke-width="0.22">multiple children objects</text>
<text x="171.90" y="183.90" font-size="9.7" fill="#ffffff" font-weight="bold" text-anchor="middle" textLength="91.60" lengthAdjust="spacingAndGlyphs" stroke="#fff" stroke-width="0.22">that extract different</text>
<text x="172.30" y="195.70" font-size="9.7" fill="#ffffff" font-weight="bold" text-anchor="middle" textLength="121.50" lengthAdjust="spacingAndGlyphs" stroke="#fff" stroke-width="0.22">text segments on the page.</text>
<g filter="url(#sh)">
<line x1="449.00" y1="95.40" x2="409.00" y2="95.40" stroke="#f7931e" stroke-width="2.5" />
<path d="M397.60 95.40 L410.00 91.20 L410.00 99.60 Z" fill="#f7931e" />
<circle cx="449" cy="95.4" r="7.9" fill="#f7931e"/>
<rect x="449.00" y="73.20" width="132.50" height="43.60" fill="#f7931e" />
</g>
<text x="448.40" y="98.78" font-size="9.8" fill="#ffffff" font-weight="bold" text-anchor="middle" stroke="#fff" stroke-width="0.25">2</text>
<text x="515.25" y="85.40" font-size="9.7" fill="#ffffff" font-weight="bold" text-anchor="middle" textLength="108.00" lengthAdjust="spacingAndGlyphs" stroke="#fff" stroke-width="0.22">By default, the Collation</text>
<text x="515.25" y="97.30" font-size="9.7" fill="#ffffff" font-weight="bold" text-anchor="middle" textLength="75.60" lengthAdjust="spacingAndGlyphs" stroke="#fff" stroke-width="0.22">property is set to</text>
<text x="515.25" y="109.00" font-size="9.7" fill="#ffffff" font-weight="bold" text-anchor="middle" textLength="55.50" lengthAdjust="spacingAndGlyphs" stroke="#fff" stroke-width="0.22">“Individual”.</text>
<g filter="url(#sh)">
<line x1="366.90" y1="376.10" x2="407.90" y2="376.18" stroke="#f7931e" stroke-width="2.5" />
<path d="M419.30 376.20 L406.89 380.38 L406.91 371.98 Z" fill="#f7931e" />
<circle cx="366.9" cy="376.1" r="7.9" fill="#f7931e"/>
<rect x="235.10" y="348.90" width="131.80" height="54.50" fill="#f7931e" />
</g>
<text x="367.00" y="379.48" font-size="9.8" fill="#ffffff" font-weight="bold" text-anchor="middle" stroke="#fff" stroke-width="0.25">3</text>
<text x="300.10" y="361.20" font-size="9.7" fill="#ffffff" font-weight="bold" text-anchor="middle" textLength="120.40" lengthAdjust="spacingAndGlyphs" stroke="#fff" stroke-width="0.22">With the Collation property</text>
<text x="300.10" y="373.00" font-size="9.7" fill="#ffffff" font-weight="bold" text-anchor="middle" textLength="107.80" lengthAdjust="spacingAndGlyphs" stroke="#fff" stroke-width="0.22">set to &quot;Individual&quot;, each</text>
<text x="300.20" y="384.80" font-size="9.7" fill="#ffffff" font-weight="bold" text-anchor="middle" textLength="102.30" lengthAdjust="spacingAndGlyphs" stroke="#fff" stroke-width="0.22">result is returned as its</text>
<text x="300.10" y="396.60" font-size="9.7" fill="#ffffff" font-weight="bold" text-anchor="middle" textLength="49.00" lengthAdjust="spacingAndGlyphs" stroke="#fff" stroke-width="0.22">own result.</text>
</svg>
</body>
</html>
